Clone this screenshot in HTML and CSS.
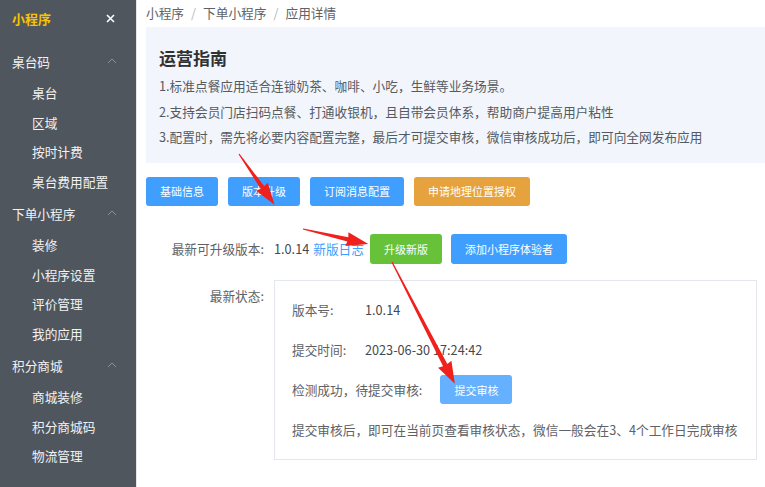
FILE: index.html
```html
<!DOCTYPE html>
<html lang="zh-CN">
<head>
    <meta charset="UTF-8">
    <meta name="viewport" content="width=device-width, initial-scale=1.0">
    <title>应用详情 - 小程序</title>
    <link rel="stylesheet" href="styles.css">
</head>
<body>
    <!-- Left menu -->
    <div class="sidebar">
        <div class="sidebar-head">
            <span class="sidebar-title">小程序</span>
            <svg class="close-icon" width="9" height="9" viewBox="0 0 9 9"><path d="M1 1L8 8M8 1L1 8" stroke="#fff" stroke-width="1.6"/></svg>
        </div>
        <div class="menu">
            <div class="menu-group">
                <span>桌台码</span>
                <svg class="chevron" width="10" height="6" viewBox="0 0 10 6"><path d="M1 5L5 1L9 5" fill="none" stroke="#8a9097" stroke-width="1"/></svg>
            </div>
            <a href="#" class="menu-item">桌台</a>
            <a href="#" class="menu-item">区域</a>
            <a href="#" class="menu-item">按时计费</a>
            <a href="#" class="menu-item">桌台费用配置</a>
            <div class="menu-group">
                <span>下单小程序</span>
                <svg class="chevron" width="10" height="6" viewBox="0 0 10 6"><path d="M1 5L5 1L9 5" fill="none" stroke="#8a9097" stroke-width="1"/></svg>
            </div>
            <a href="#" class="menu-item">装修</a>
            <a href="#" class="menu-item">小程序设置</a>
            <a href="#" class="menu-item">评价管理</a>
            <a href="#" class="menu-item">我的应用</a>
            <div class="menu-group">
                <span>积分商城</span>
                <svg class="chevron" width="10" height="6" viewBox="0 0 10 6"><path d="M1 5L5 1L9 5" fill="none" stroke="#8a9097" stroke-width="1"/></svg>
            </div>
            <a href="#" class="menu-item">商城装修</a>
            <a href="#" class="menu-item">积分商城码</a>
            <a href="#" class="menu-item">物流管理</a>
        </div>
    </div>

    <div class="main">
        <div class="breadcrumb">
            <span>小程序</span><i>/</i><span>下单小程序</span><i>/</i><span class="current">应用详情</span>
        </div>

        <!-- Guide -->
        <div class="guide">
            <h2>运营指南</h2>
            <div class="guide-list">
                <p>1.标准点餐应用适合连锁奶茶、咖啡、小吃，生鲜等业务场景。</p>
                <p>2.支持会员门店扫码点餐、打通收银机，且自带会员体系，帮助商户提高用户粘性</p>
                <p>3.配置时，需先将必要内容配置完整，最后才可提交审核，微信审核成功后，即可向全网发布应用</p>
            </div>
        </div>

        <div class="tabs">
            <button class="btn btn-primary">基础信息</button>
            <button class="btn btn-primary">版本升级</button>
            <button class="btn btn-primary">订阅消息配置</button>
            <button class="btn btn-warning">申请地理位置授权</button>
        </div>

        <div class="form-row upgrade-row">
            <label class="form-label">最新可升级版本:</label>
            <div class="form-content">
                <span class="version">1.0.14</span>
                <a href="#" class="link">新版日志</a>
                <button class="btn btn-success">升级新版</button>
                <button class="btn btn-primary">添加小程序体验者</button>
            </div>
        </div>

        <div class="form-row status-row">
            <label class="form-label">最新状态:</label>
            <div class="status-box">
                <div class="status-line">
                    <span class="status-key">版本号:</span>
                    <span class="status-val">1.0.14</span>
                </div>
                <div class="status-line">
                    <span class="status-key">提交时间:</span>
                    <span class="status-val">2023-06-30 17:24:42</span>
                </div>
                <div class="status-line">
                    <span>检测成功，待提交审核:</span>
                    <button class="btn btn-light">提交审核</button>
                </div>
                <div class="status-line">
                    <span>提交审核后，即可在当前页查看审核状态，微信一般会在3、4个工作日完成审核</span>
                </div>
            </div>
        </div>
    </div>

    <!-- Red hint arrows drawn over the page -->
    <svg class="arrows" width="765" height="487" viewBox="0 0 765 487">
        <g fill="#f0201c">
            <polygon points="0,-0.6 41,-2.2 40,-7 62,0 40,7 41,2.2 0,0.6" transform="translate(239 154) rotate(55)"/>
            <polygon points="0,-0.6 46,-2.2 45,-7 67,0 45,7 46,2.2 0,0.6" transform="translate(303 229) rotate(13)"/>
            <polygon points="0,-0.6 116,-2.4 115,-7.5 137,0 115,7.5 116,2.4 0,0.6" transform="translate(392 262) rotate(62.7)"/>
        </g>
    </svg>
</body>
</html>
```

FILE: styles.css
```css
* {
    margin: 0;
    padding: 0;
    box-sizing: border-box;
}

body {
    font-family: "Noto Sans CJK SC", "Noto Sans", sans-serif;
    background: #fff;
    display: flex;
    min-height: 100vh;
    position: relative;
    overflow: hidden;
    color: #606266;
}

/* Sidebar */
.sidebar {
    width: 137px;
    flex-shrink: 0;
    background: #50565d;
    border-right: 1px solid #e4e6ea;
}

.sidebar-head {
    height: 36px;
    display: flex;
    align-items: center;
    justify-content: space-between;
    padding: 0 21px 0 12px;
}

.sidebar-title {
    color: #f6c400;
    font-size: 13px;
    font-weight: 700;
}

.menu {
    padding-top: 8px;
}

.menu-group {
    height: 34px;
    display: flex;
    align-items: center;
    justify-content: space-between;
    padding: 0 19px 0 12px;
    color: #f2f2f2;
    font-size: 12.7px;
}

.menu-item {
    display: flex;
    align-items: center;
    height: 29.5px;
    padding-left: 32px;
    color: #f2f2f2;
    font-size: 12.7px;
    text-decoration: none;
}

/* Main */
.main {
    flex: 1;
    padding-left: 9px;
}

.breadcrumb {
    height: 24px;
    display: flex;
    align-items: center;
    font-size: 12.7px;
    color: #606266;
}

.breadcrumb i {
    font-style: normal;
    color: #b4b8bf;
    margin: 0 7px;
}

.guide {
    margin-top: 3px;
    background: #f2f6fc;
    padding: 18px 12px 13px 13px;
}

.guide h2 {
    font-size: 17px;
    font-weight: 700;
    line-height: 26px;
    color: #303133;
}

.guide-list {
    margin-top: 2px;
}

.guide-list p {
    font-size: 12.7px;
    line-height: 25.5px;
    color: #555a60;
}

.tabs {
    display: flex;
    gap: 10px;
    margin-top: 14px;
}

.btn {
    height: 29px;
    padding: 0 14px;
    border: none;
    border-radius: 3px;
    font-family: inherit;
    font-size: 11px;
    color: #fff;
    cursor: pointer;
}

.btn-primary {
    background: #409eff;
}

.btn-warning {
    background: #e6a23c;
}

.btn-success {
    background: #67c23a;
}

.btn-light {
    background: #66b1ff;
}

.form-row {
    display: flex;
}

.form-label {
    width: 128px;
    flex-shrink: 0;
    text-align: right;
    padding-right: 10px;
    font-size: 12.7px;
    color: #606266;
}

.upgrade-row {
    margin-top: 28px;
    align-items: center;
}

.upgrade-row .btn {
    height: 30px;
}

.form-content {
    display: flex;
    align-items: center;
    font-size: 12.7px;
}

.version {
    color: #45484d;
}

.link {
    color: #409eff;
    text-decoration: none;
    margin: 0 6px 0 4px;
}

.upgrade-row .btn-primary {
    margin-left: 9px;
}

.status-row {
    margin-top: 16px;
}

.status-row .form-label {
    padding-top: 6px;
}

.status-box {
    width: 483px;
    border: 1px solid #e4e7ed;
    padding: 9px 17px;
}

.status-line {
    height: 40px;
    display: flex;
    align-items: center;
    font-size: 12.7px;
    color: #606266;
    white-space: nowrap;
}

.status-key {
    width: 73px;
}

.status-val {
    color: #45484d;
}

.status-line .btn {
    margin-left: 18px;
}

.arrows {
    position: absolute;
    left: 0;
    top: 0;
    pointer-events: none;
}
```
